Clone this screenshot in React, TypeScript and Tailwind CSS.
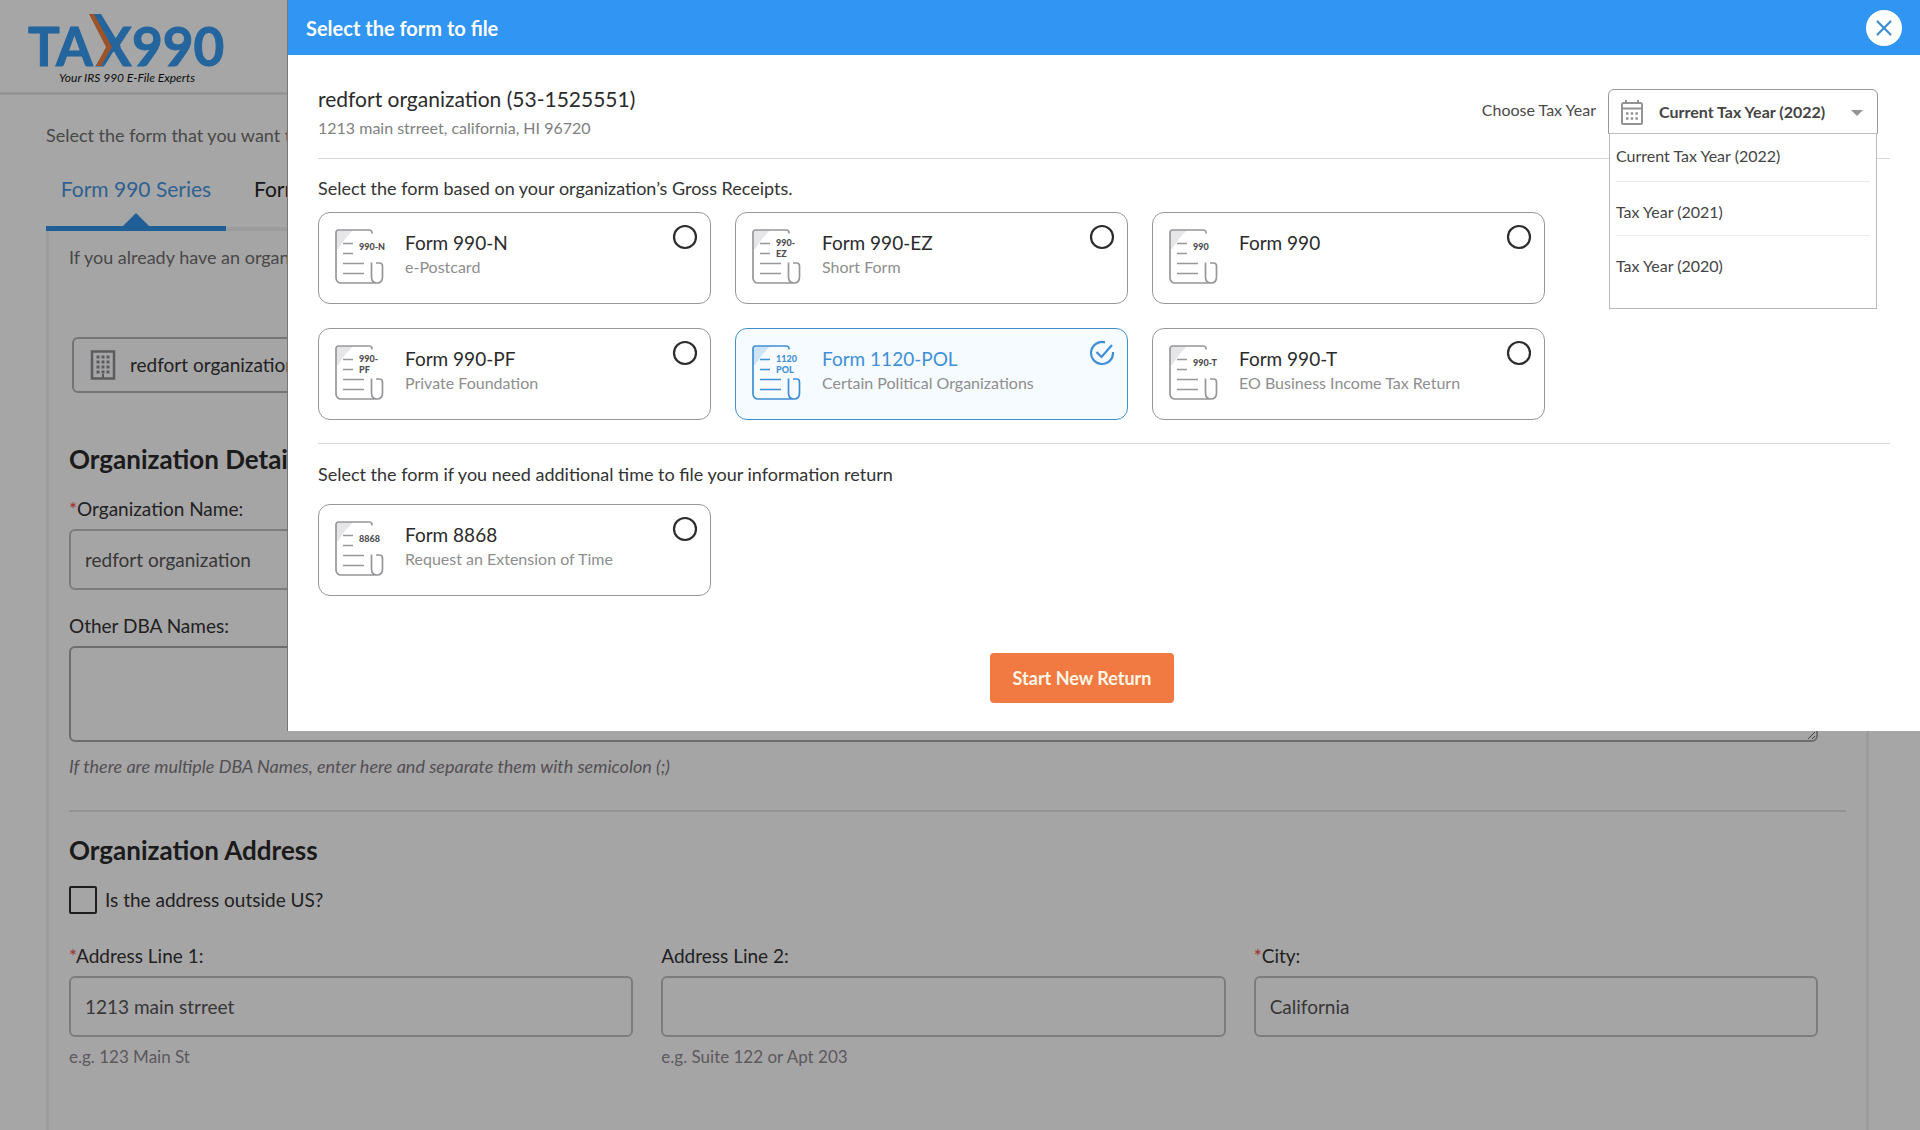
import React, { useState } from 'react';
import { X } from 'lucide-react';

interface FormOption {
  id: string;
  name: string;
  detail?: string;
  badge: string[];
}

const RECEIPT_FORMS: FormOption[] = [
  { id: '990-n', name: 'Form 990-N', detail: 'e-Postcard', badge: ['990-N'] },
  { id: '990-ez', name: 'Form 990-EZ', detail: 'Short Form', badge: ['990-', 'EZ'] },
  { id: '990', name: 'Form 990', badge: ['990'] },
  { id: '990-pf', name: 'Form 990-PF', detail: 'Private Foundation', badge: ['990-', 'PF'] },
  { id: '1120-pol', name: 'Form 1120-POL', detail: 'Certain Political Organizations', badge: ['1120', 'POL'] },
  { id: '990-t', name: 'Form 990-T', detail: 'EO Business Income Tax Return', badge: ['990-T'] },
];

const EXTENSION_FORMS: FormOption[] = [
  { id: '8868', name: 'Form 8868', detail: 'Request an Extension of Time', badge: ['8868'] },
];

const TAX_YEARS = ['Current Tax Year (2022)', 'Tax Year (2021)', 'Tax Year (2020)'];

const Logo = () => (
  <svg width="200" height="76" viewBox="0 0 200 76" role="img" aria-label="TAX990">
    <g fontFamily="Lato, sans-serif" fontWeight="700" fontSize="53" fill="#389bf2" stroke="#389bf2" strokeWidth="1">
      <text x="0" y="56">TA</text>
      <text x="68" y="56">X</text>
      <text x="104" y="56">990</text>
    </g>
    <path d="M65 4h8l20 33-8 5z" fill="#389bf2" />
    <path d="M61 4h5l18 33-11 19h-5l10-19z" fill="#f0803c" />
    <text x="31" y="72" fontFamily="Lato, sans-serif" fontSize="12" fontStyle="italic" fill="#111">
      Your IRS 990 E-File Experts
    </text>
  </svg>
);

const BuildingIcon = () => (
  <svg width="26" height="30" viewBox="0 0 26 30" fill="none" stroke="#8c8c90" strokeWidth="2" aria-hidden="true">
    <path d="M2 1.500h22v27H2z" strokeWidth="2.500" />
    <path d="M6.500 7h13M6.500 12h13M6.500 17h13M6.500 22h13" strokeWidth="3" strokeDasharray="3 2" />
    <path d="M13 24v5" />
  </svg>
);

const CalendarIcon = () => (
  <svg width="22" height="25" viewBox="0 0 22 25" fill="none" stroke="#939393" strokeWidth="2" aria-hidden="true">
    <rect x="1" y="3" width="20" height="21" rx="1.500" />
    <path d="M1 8.500h20M5 0v4M17 0v4" />
    <path d="M5 13.500h12M5 18.500h12" strokeWidth="2.500" strokeDasharray="2.500 2.200" />
  </svg>
);

const FormIcon = ({ badge, active }: { badge: string[]; active: boolean }) => {
  const line = active ? '#3f8fd8' : '#97979b';
  return (
    <svg width="54" height="56" viewBox="0 0 54 56" fill="none" className="shrink-0" aria-hidden="true">
      <path d="M1 1h17L10 10 3 20H1z" fill={active ? '#cfe3f7' : '#e6e6e9'} />
      <path
        d="M37 4.500V3.500A2.500 2.500 0 0 0 34.500 1H3.500A2.500 2.500 0 0 0 1 3.500V49a5 5 0 0 0 5 5h36c-3.500 0-5.500-2.500-5.500-6V33.500M41 34h3.500a3 3 0 0 1 3 3v11c0 3.500-2 6-5.500 6"
        stroke={line}
        strokeWidth="1.700"
      />
      <path d="M8 14.500h10M8 24.500h10M8 34.500h21M8 44.500h21" stroke={line} strokeWidth="1.500" />
      <g fontFamily="Lato, sans-serif" fontWeight="900" fontSize="9" fill={active ? '#3f8fd8' : '#4c4c50'}>
        {badge.map((text, i) => (
          <text key={text} x="24" y={badge.length === 1 ? 21 : 17 + i * 11}>
            {text}
          </text>
        ))}
      </g>
    </svg>
  );
};

const FormCard = ({ form, active, onSelect }: { form: FormOption; active: boolean; onSelect: () => void }) => (
  <label
    className={`flex w-1/4 h-[92px] items-start rounded-xl border pl-4 pr-3 pt-4 cursor-pointer ${
      active ? 'border-[#3f8fd0] bg-[#f6fbff]' : 'border-[#96969b] bg-white'
    }`}
  >
    <FormIcon badge={form.badge} active={active} />
    <span className="flex flex-col flex-1 pl-4 whitespace-nowrap">
      <span className={`text-[19px] leading-7 ${active ? 'text-[#3f8fd8]' : 'text-[#2b2b2b]'}`}>{form.name}</span>
      {form.detail && <span className="text-base leading-5 text-[#8e8e8e]">{form.detail}</span>}
    </span>
    <input type="radio" name="form" className="sr-only" checked={active} onChange={onSelect} />
    {active ? (
      <svg width="26" height="26" viewBox="0 0 26 26" fill="none" stroke="#3f8fd8" strokeWidth="2.200" className="-mt-[5px]" aria-hidden="true">
        <path d="M16 2.400A11 11 0 1 0 24 12" />
        <path d="M7.500 12l5 5L23 5" />
      </svg>
    ) : (
      <svg width="26" height="26" viewBox="0 0 26 26" fill="none" stroke="#2c2c2c" strokeWidth="2.200" className="-mt-[5px]" aria-hidden="true">
        <circle cx="13" cy="13" r="11" />
      </svg>
    )}
  </label>
);

interface FieldProps {
  id: string;
  label: string;
  value: string;
  required?: boolean;
  hint?: string;
}

const Field = ({ id, label, value, required, hint }: FieldProps) => (
  <div className="flex flex-col">
    <label htmlFor={id} className="text-[19px] leading-6 text-[#333]">
      {required && <span className="text-[#f04848]">*</span>}
      {label}
    </label>
    <input
      id={id}
      type="text"
      defaultValue={value}
      className="mt-2 h-[61px] w-full rounded-md border-2 border-[#c0bec2] bg-transparent px-3.5 text-[19px] text-[#555]"
    />
    {hint && <span className="mt-2 text-[17px] leading-6 text-[#8c8a8e]">{hint}</span>}
  </div>
);

const OrganizationPage = () => (
  <div className="w-full bg-white">
    <header className="flex h-[95px] items-start border-b-3 border-[#e6e6e6] pl-7 pt-2.5">
      <Logo />
    </header>
    <main className="pl-[46px] pr-[51px] pt-[26px]">
      <p className="text-lg leading-7 text-[#6f6f6f]">Select the form that you want to file</p>
      <nav className="mt-[26px] flex border-b-4 border-[#f0f0f0] text-[21px] leading-7">
        <a href="#990" className="relative -mb-1 flex h-14 w-[180px] justify-center border-b-5 border-[#3292e6] text-[#4a96e0]">
          Form 990 Series
          <span className="absolute -bottom-px left-1/2 size-0 -translate-x-1/2 border-x-14 border-b-14 border-x-transparent border-b-[#3292e6]" />
        </a>
        <a href="#8868" className="pl-7 text-[#222]">Form 8868</a>
      </nav>
      <section className="border-x-3 border-[#f0f0f0] bg-[#fffdff] pb-24 pl-5 pr-5 pt-3">
        <p className="text-lg leading-7 text-[#6f6f6f]">If you already have an organization, select it below</p>
        <button type="button" className="mt-[66px] ml-[3px] flex h-14 w-[480px] items-center gap-3.5 rounded-md border-2 border-[#b4b2b6] px-4 text-[19px] text-[#333]">
          <BuildingIcon />
          redfort organization
        </button>
        <h2 className="mt-[50px] text-[26px] leading-8 font-bold text-[#2a2a2a]">Organization Details</h2>
        <div className="mt-[22px] pr-7">
          <Field id="org-name" label="Organization Name:" value="redfort organization" required />
        </div>
        <div className="mt-6 flex flex-col pr-7">
          <label htmlFor="dba" className="text-[19px] leading-6 text-[#333]">Other DBA Names:</label>
          <textarea id="dba" className="mt-2 h-24 w-full resize-y rounded-md border-2 border-[#a8a6aa] bg-transparent" />
          <span className="mt-3 text-lg leading-6 italic text-[#7e7c80]">
            If there are multiple DBA Names, enter here and separate them with semicolon (;)
          </span>
        </div>
        <hr className="mt-8 border-t-2 border-[#e2e0e4]" />
        <h2 className="mt-[22px] text-[26px] leading-8 font-bold text-[#2a2a2a]">Organization Address</h2>
        <label className="mt-5 flex items-center gap-2 text-[19px] leading-7 text-[#333]">
          <input type="checkbox" className="size-7 appearance-none rounded-xs border-2 border-[#2e2e2e]" />
          Is the address outside US?
        </label>
        <div className="mt-[30px] grid grid-cols-3 gap-7 pr-7">
          <Field id="line-1" label="Address Line 1:" value="1213 main strreet" required hint="e.g. 123 Main St" />
          <Field id="line-2" label="Address Line 2:" value="" hint="e.g. Suite 122 or Apt 203" />
          <Field id="city" label="City:" value="California" required />
        </div>
      </section>
    </main>
  </div>
);

const SelectFormDialog = () => {
  const [selected, setSelected] = useState('1120-pol');
  const [year, setYear] = useState(TAX_YEARS[0]);

  return (
    <div role="dialog" aria-labelledby="dialog-title" className="ml-[287px] flex-1 border-l border-[#777] bg-white">
      <div className="flex h-[55px] items-center justify-between bg-[#3095f3] px-[18px]">
        <h1 id="dialog-title" className="text-xl font-bold text-white">Select the form to file</h1>
        <button type="button" aria-label="Close" className="flex size-9 items-center justify-center rounded-full bg-white text-[#3f8fd0]">
          <X size={26} strokeWidth={2} />
        </button>
      </div>

      <div className="px-[30px] pb-7">
        <div className="flex justify-between border-b border-[#d8d8d8] pb-4 pt-7">
          <div>
            <h2 className="text-[21px] leading-[31px] text-[#2b2b2b]">redfort organization (53-1525551)</h2>
            <p className="text-base leading-7 text-[#808080]">1213 main strreet, california, HI 96720</p>
          </div>
          <div className="flex items-start gap-3 pr-3 pt-1.5">
            <label htmlFor="tax-year" className="text-base leading-[42px] text-[#4a4a4a]">Choose Tax Year</label>
            <div className="relative h-[45px] w-[270px] rounded-t-md border border-[#98989c] text-[#444]">
              <span className="absolute left-3 top-2.5 pointer-events-none">
                <CalendarIcon />
              </span>
              <select
                id="tax-year"
                value={year}
                onChange={(e) => setYear(e.target.value)}
                className="h-full w-full appearance-none bg-transparent pl-[50px] text-base font-bold"
              >
                {TAX_YEARS.map((y) => (
                  <option key={y}>{y}</option>
                ))}
              </select>
              <span className="absolute right-3.5 top-5 size-0 border-x-6 border-t-6 border-x-transparent border-t-[#939393] pointer-events-none" />
              {/* Open list */}
              <ul className="absolute inset-x-0 top-full h-[176px] border border-[#bbb] bg-white px-1.5 z-10">
                {TAX_YEARS.map((y) => (
                  <li key={y} className="h-[54px] border-b border-[#ececec] pt-4 first:h-12 first:pt-2 last:border-0">
                    <button type="button" onClick={() => setYear(y)} className="text-base leading-7 text-[#444]">
                      {y}
                    </button>
                  </li>
                ))}
              </ul>
            </div>
          </div>
        </div>

        <h3 className="mt-[15px] text-lg leading-7 text-[#333]">Select the form based on your organization’s Gross Receipts.</h3>
        <div className="mt-2.5 flex flex-wrap gap-6 border-b border-[#d8d8d8] pb-[23px]">
          {RECEIPT_FORMS.map((form) => (
            <FormCard key={form.id} form={form} active={selected === form.id} onSelect={() => setSelected(form.id)} />
          ))}
        </div>

        <h3 className="mt-4 text-lg leading-7 text-[#333]">Select the form if you need additional time to file your information return</h3>
        <div className="mt-4 flex flex-wrap gap-6">
          {EXTENSION_FORMS.map((form) => (
            <FormCard key={form.id} form={form} active={selected === form.id} onSelect={() => setSelected(form.id)} />
          ))}
        </div>

        <div className="mt-[57px] flex justify-center pr-11">
          <button type="button" className="h-[50px] rounded-sm bg-[#f07a42] px-[23px] text-lg font-bold text-[#fff6e6]">
            Start New Return
          </button>
        </div>
      </div>
    </div>
  );
};

export default function App() {
  return (
    <div className="relative min-h-screen overflow-hidden bg-white font-['Lato',sans-serif]">
      <OrganizationPage />
      {/* Dimmed backdrop with the dialog docked to the right */}
      <div className="absolute inset-0 flex items-start bg-black/35">
        <SelectFormDialog />
      </div>
    </div>
  );
}
